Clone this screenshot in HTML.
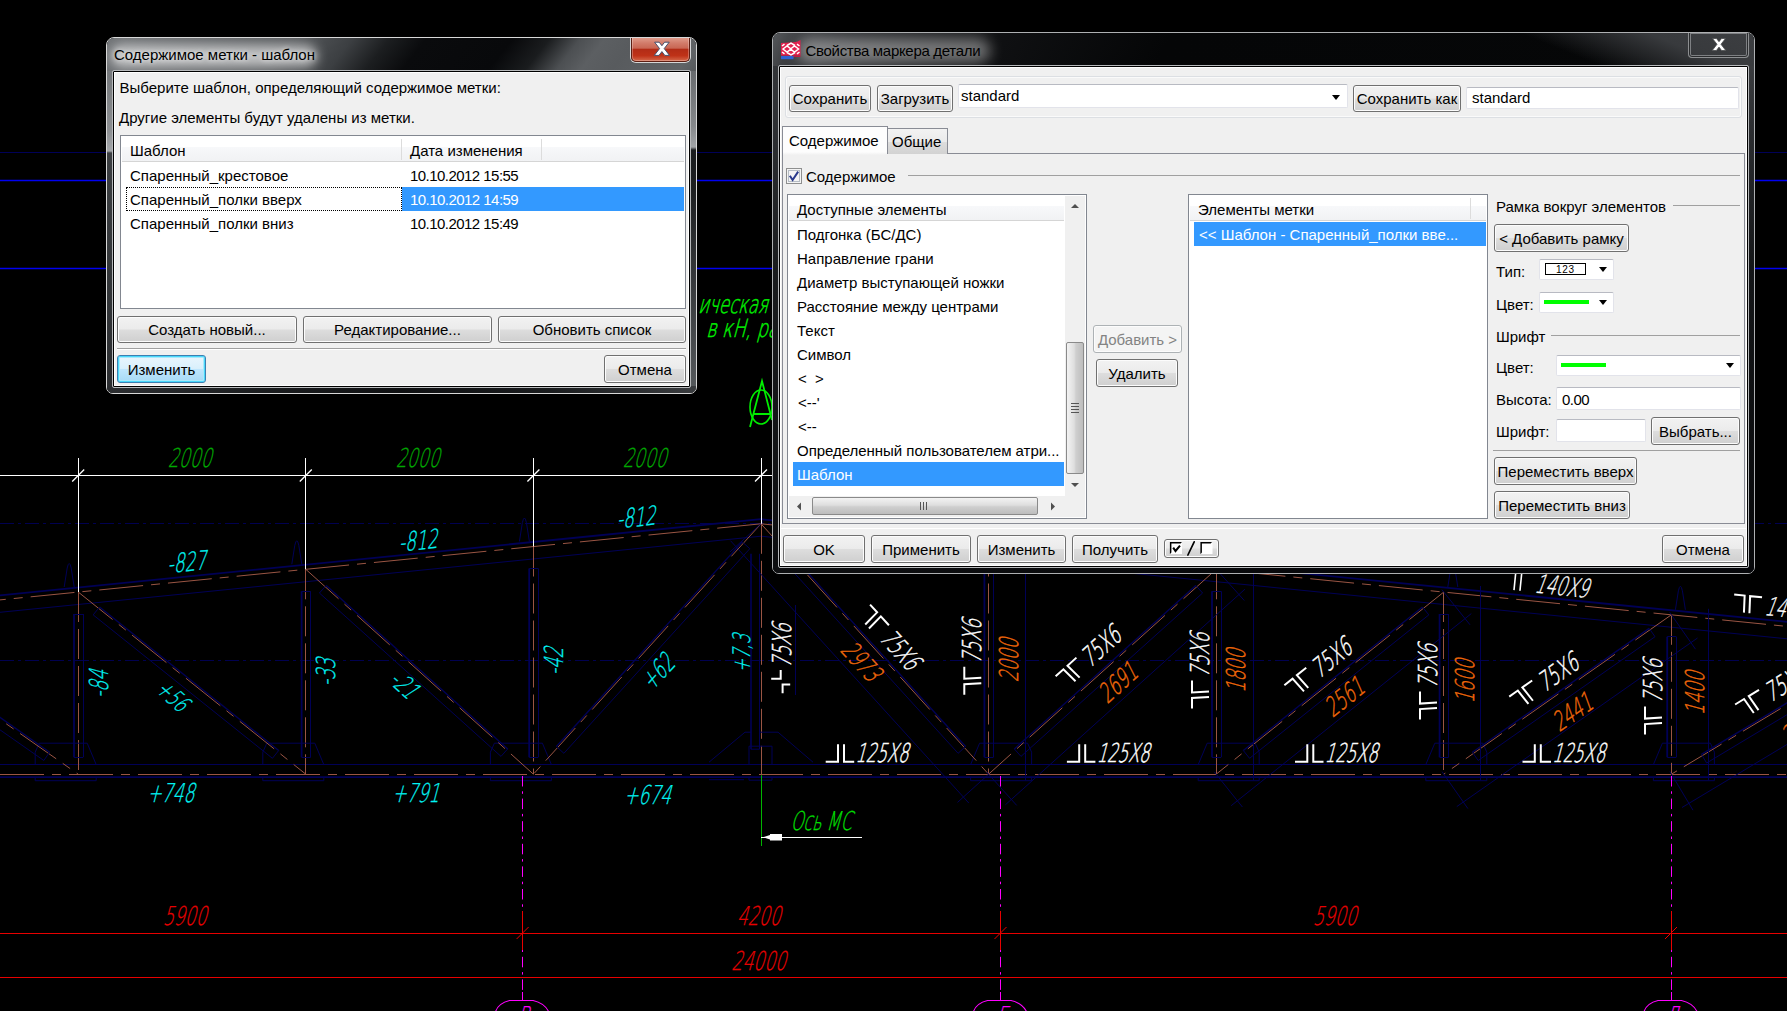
<!DOCTYPE html>
<html lang="ru">
<head>
<meta charset="utf-8">
<title>Свойства маркера детали</title>
<style>
*{box-sizing:border-box;margin:0;padding:0}
html,body{width:1787px;height:1011px;overflow:hidden;background:#000}
body{position:relative;font-family:"Liberation Sans",sans-serif;font-size:15px;color:#000;line-height:1}
.abs{position:absolute}
#cad{position:absolute;left:0;top:0;width:1787px;height:1011px}
/* window frames */
.win{position:absolute;overflow:hidden;border-radius:8px 8px 7px 7px;border:1px solid #9a9c9e;background:#0b0c0e;box-shadow:inset 0 0 0 1px rgba(0,0,0,.55)}
.win .tbar{position:absolute;left:0;top:0;right:0;height:34px}
.win .sideL{position:absolute;left:0;top:33px;bottom:0;width:7px}
.win .sideR{position:absolute;right:0;top:33px;bottom:0;width:7px}
.win .botm{position:absolute;left:0;right:0;bottom:0;height:7px}
.ttl{position:absolute;white-space:nowrap;font-size:15px;color:#000;
 text-shadow:0 0 4px rgba(255,255,255,.55),0 0 7px rgba(255,255,255,.45)}
.glow{position:absolute;border-radius:12px;background:rgba(255,255,255,.62);filter:blur(6px)}
.client{position:absolute;background:#f0f0f0;border:1px solid #000;outline:1px solid #b8babc;box-shadow:inset 0 0 0 1px #fff;border-radius:1px}
.t{position:absolute;white-space:nowrap;font-size:15px;line-height:18px;height:18px}
.num{letter-spacing:-.54px}
.btn{position:absolute;border:1px solid #707070;border-radius:3px;text-align:center;white-space:nowrap;font-size:15px;
 background:linear-gradient(180deg,#f2f2f2 0,#ebebeb 48%,#dddddd 52%,#cfcfcf 100%);box-shadow:inset 0 0 0 1px #fcfcfc}
.btn.def{border-color:#3c7fb1;box-shadow:inset 0 0 0 1px #48d8fb, inset 0 0 0 2px #a9e9fb;background:linear-gradient(180deg,#eaf6fd 0,#d9f0fc 48%,#bee6fd 52%,#a7d9f5 100%)}
.btn.dis{color:#838383;border-color:#adb2b5;background:#f4f4f4}
.btn span{position:absolute;left:0;right:0;top:50%;margin-top:-8.5px;line-height:18px;height:18px}
.inp{position:absolute;background:#fff;border:1px solid #e3e9ef;border-top-color:#abadb3;border-radius:2px;box-shadow:none}
.inp2{position:absolute;background:#fff;border:1px solid #e2e3ea;border-top-color:#b8bac2;border-radius:2px}
.list{position:absolute;background:#fff;border:1px solid #828790}
.hdr{position:absolute;background:linear-gradient(180deg,#fff 0,#fff 40%,#f7f8fa 41%,#f1f2f4 100%);border-bottom:1px solid #d5d5d5}
.sel{position:absolute;background:#3399ff;color:#fff}
.hline{position:absolute;height:2px;border-top:1px solid #a0a0a0;border-bottom:1px solid #fff}
.arr{position:absolute;width:0;height:0;margin:1px 0 0 .5px;border-left:4.5px solid transparent;border-right:4.5px solid transparent;border-top:5px solid #000}
.closeb{position:absolute;border:1px solid #3d3f41;border-top:none;border-radius:0 0 5px 5px;box-shadow:0 0 0 1px rgba(255,255,255,.35), inset 0 0 0 1px rgba(255,255,255,.3)}
</style>
</head>
<body>
<svg id="cad" width="1787" height="1011" viewBox="0 0 1787 1011" font-family="'DejaVu Sans','Liberation Sans',sans-serif" shape-rendering="auto">
<line x1="0.0" y1="152.5" x2="1787.0" y2="152.5" stroke="#000058" stroke-width="1"/>
<line x1="0.0" y1="180.5" x2="1787.0" y2="180.5" stroke="#0000f0" stroke-width="1.3"/>
<line x1="0.0" y1="268.5" x2="1787.0" y2="268.5" stroke="#0000f0" stroke-width="1.3"/>
<line x1="0.0" y1="523.5" x2="1787.0" y2="523.5" stroke="#000050" stroke-width="1" stroke-dasharray="14 4 3 4"/>
<line x1="0.0" y1="660.5" x2="1787.0" y2="660.5" stroke="#000050" stroke-width="1" stroke-dasharray="14 4 3 4"/>
<line x1="761.0" y1="523.8" x2="-339.0" y2="633.8" stroke="#9a5544" stroke-width="1" stroke-dasharray="44 8 9 8"/>
<line x1="761.0" y1="519.2" x2="-339.0" y2="629.2" stroke="#000056" stroke-width="1.8"/>
<line x1="761.0" y1="536.2" x2="-339.0" y2="646.2" stroke="#000056" stroke-width="1"/>
<line x1="761.0" y1="523.8" x2="1861.0" y2="633.8" stroke="#9a5544" stroke-width="1" stroke-dasharray="44 8 9 8"/>
<line x1="761.0" y1="519.2" x2="1861.0" y2="629.2" stroke="#000056" stroke-width="1.8"/>
<line x1="761.0" y1="536.2" x2="1861.0" y2="646.2" stroke="#000056" stroke-width="1"/>
<line x1="0.0" y1="774.5" x2="1787.0" y2="774.5" stroke="#9a5544" stroke-width="1" stroke-dasharray="44 8 9 8"/>
<line x1="0.0" y1="764.5" x2="1787.0" y2="764.5" stroke="#000056" stroke-width="1"/>
<line x1="0.0" y1="777.2" x2="1787.0" y2="777.2" stroke="#000056" stroke-width="1.8"/>
<line x1="-149.5" y1="614.8" x2="-149.5" y2="774.2" stroke="#9a5544" stroke-width="1" stroke-dasharray="30 7"/>
<line x1="-153.6" y1="636.8" x2="-153.6" y2="757.2" stroke="#000056" stroke-width="1.8"/>
<line x1="-144.5" y1="636.8" x2="-144.5" y2="757.2" stroke="#000056" stroke-width="1"/>
<line x1="-153.6" y1="757.5" x2="-144.6" y2="757.5" stroke="#000056" stroke-width="1"/>
<line x1="-153.6" y1="636.5" x2="-144.6" y2="636.5" stroke="#000056" stroke-width="1"/>
<path d="M-192.4,764.6 V752.2 L-188.4,743.2 H-140.4 L-131.4,764.6" stroke="#000056" stroke-width="1" fill="none"/>
<path d="M-192.4,777.2 V780.7 H-131.4 V777.2" stroke="#000056" stroke-width="1" fill="none"/>
<path d="M-163.4,609.79 L-160.4,590.79 Q-158.4,581.79 -156.4,590.79 L-153.4,609.79" stroke="#000056" stroke-width="1" fill="none"/>
<line x1="78.5" y1="592.0" x2="78.5" y2="774.2" stroke="#9a5544" stroke-width="1" stroke-dasharray="30 7"/>
<line x1="74.0" y1="614.0" x2="74.0" y2="757.2" stroke="#000056" stroke-width="1.8"/>
<line x1="83.5" y1="614.0" x2="83.5" y2="757.2" stroke="#000056" stroke-width="1"/>
<line x1="74.0" y1="757.5" x2="83.0" y2="757.5" stroke="#000056" stroke-width="1"/>
<line x1="74.0" y1="614.5" x2="83.0" y2="614.5" stroke="#000056" stroke-width="1"/>
<path d="M35.2,764.6 V752.2 L39.2,743.2 H87.2 L96.2,764.6" stroke="#000056" stroke-width="1" fill="none"/>
<path d="M35.2,777.2 V780.7 H96.2 V777.2" stroke="#000056" stroke-width="1" fill="none"/>
<path d="M64.2,587.03 L67.2,568.03 Q69.2,559.03 71.2,568.03 L74.2,587.03" stroke="#000056" stroke-width="1" fill="none"/>
<line x1="305.5" y1="569.3" x2="305.5" y2="774.2" stroke="#9a5544" stroke-width="1" stroke-dasharray="30 7"/>
<line x1="301.6" y1="591.3" x2="301.6" y2="757.2" stroke="#000056" stroke-width="1.8"/>
<line x1="310.5" y1="591.3" x2="310.5" y2="757.2" stroke="#000056" stroke-width="1"/>
<line x1="301.6" y1="757.5" x2="310.6" y2="757.5" stroke="#000056" stroke-width="1"/>
<line x1="301.6" y1="591.5" x2="310.6" y2="591.5" stroke="#000056" stroke-width="1"/>
<path d="M262.8,764.6 V752.2 L266.8,743.2 H314.8 L323.8,764.6" stroke="#000056" stroke-width="1" fill="none"/>
<path d="M262.8,777.2 V780.7 H323.8 V777.2" stroke="#000056" stroke-width="1" fill="none"/>
<path d="M291.8,564.27 L294.8,545.27 Q296.8,536.27 298.8,545.27 L301.8,564.27" stroke="#000056" stroke-width="1" fill="none"/>
<line x1="533.5" y1="546.5" x2="533.5" y2="774.2" stroke="#9a5544" stroke-width="1" stroke-dasharray="30 7"/>
<line x1="529.2" y1="568.5" x2="529.2" y2="757.2" stroke="#000056" stroke-width="1.8"/>
<line x1="538.5" y1="568.5" x2="538.5" y2="757.2" stroke="#000056" stroke-width="1"/>
<line x1="529.2" y1="757.5" x2="538.2" y2="757.5" stroke="#000056" stroke-width="1"/>
<line x1="529.2" y1="568.5" x2="538.2" y2="568.5" stroke="#000056" stroke-width="1"/>
<path d="M490.4,764.6 V752.2 L494.4,743.2 H542.4 L551.4,764.6" stroke="#000056" stroke-width="1" fill="none"/>
<path d="M490.4,777.2 V780.7 H551.4 V777.2" stroke="#000056" stroke-width="1" fill="none"/>
<path d="M519.4,541.51 L522.4,522.51 Q524.4,513.51 526.4,522.51 L529.4,541.51" stroke="#000056" stroke-width="1" fill="none"/>
<line x1="988.5" y1="546.5" x2="988.5" y2="774.2" stroke="#9a5544" stroke-width="1" stroke-dasharray="30 7"/>
<line x1="984.4" y1="568.5" x2="984.4" y2="757.2" stroke="#000056" stroke-width="1.8"/>
<line x1="993.5" y1="568.5" x2="993.5" y2="757.2" stroke="#000056" stroke-width="1"/>
<line x1="984.4" y1="757.5" x2="993.4" y2="757.5" stroke="#000056" stroke-width="1"/>
<line x1="984.4" y1="568.5" x2="993.4" y2="568.5" stroke="#000056" stroke-width="1"/>
<path d="M1031.6,764.6 V752.2 L1027.6,743.2 H979.6 L970.6,764.6" stroke="#000056" stroke-width="1" fill="none"/>
<path d="M1031.6,777.2 V780.7 H970.6 V777.2" stroke="#000056" stroke-width="1" fill="none"/>
<path d="M992.6,541.51 L995.6,522.51 Q997.6,513.51 999.6,522.51 L1002.6,541.51" stroke="#000056" stroke-width="1" fill="none"/>
<line x1="1216.5" y1="569.3" x2="1216.5" y2="774.2" stroke="#9a5544" stroke-width="1" stroke-dasharray="30 7"/>
<line x1="1212.0" y1="591.3" x2="1212.0" y2="757.2" stroke="#000056" stroke-width="1.8"/>
<line x1="1221.5" y1="591.3" x2="1221.5" y2="757.2" stroke="#000056" stroke-width="1"/>
<line x1="1212.0" y1="757.5" x2="1221.0" y2="757.5" stroke="#000056" stroke-width="1"/>
<line x1="1212.0" y1="591.5" x2="1221.0" y2="591.5" stroke="#000056" stroke-width="1"/>
<path d="M1259.2,764.6 V752.2 L1255.2,743.2 H1207.2 L1198.2,764.6" stroke="#000056" stroke-width="1" fill="none"/>
<path d="M1259.2,777.2 V780.7 H1198.2 V777.2" stroke="#000056" stroke-width="1" fill="none"/>
<path d="M1220.2,564.27 L1223.2,545.27 Q1225.2,536.27 1227.2,545.27 L1230.2,564.27" stroke="#000056" stroke-width="1" fill="none"/>
<line x1="1443.5" y1="592.0" x2="1443.5" y2="774.2" stroke="#9a5544" stroke-width="1" stroke-dasharray="30 7"/>
<line x1="1439.6" y1="614.0" x2="1439.6" y2="757.2" stroke="#000056" stroke-width="1.8"/>
<line x1="1448.5" y1="614.0" x2="1448.5" y2="757.2" stroke="#000056" stroke-width="1"/>
<line x1="1439.6" y1="757.5" x2="1448.6" y2="757.5" stroke="#000056" stroke-width="1"/>
<line x1="1439.6" y1="614.5" x2="1448.6" y2="614.5" stroke="#000056" stroke-width="1"/>
<path d="M1486.8,764.6 V752.2 L1482.8,743.2 H1434.8 L1425.8,764.6" stroke="#000056" stroke-width="1" fill="none"/>
<path d="M1486.8,777.2 V780.7 H1425.8 V777.2" stroke="#000056" stroke-width="1" fill="none"/>
<path d="M1447.8,587.03 L1450.8,568.03 Q1452.8,559.03 1454.8,568.03 L1457.8,587.03" stroke="#000056" stroke-width="1" fill="none"/>
<line x1="1671.5" y1="614.8" x2="1671.5" y2="774.2" stroke="#9a5544" stroke-width="1" stroke-dasharray="30 7"/>
<line x1="1667.2" y1="636.8" x2="1667.2" y2="757.2" stroke="#000056" stroke-width="1.8"/>
<line x1="1676.5" y1="636.8" x2="1676.5" y2="757.2" stroke="#000056" stroke-width="1"/>
<line x1="1667.2" y1="757.5" x2="1676.2" y2="757.5" stroke="#000056" stroke-width="1"/>
<line x1="1667.2" y1="636.5" x2="1676.2" y2="636.5" stroke="#000056" stroke-width="1"/>
<path d="M1714.4,764.6 V752.2 L1710.4,743.2 H1662.4 L1653.4,764.6" stroke="#000056" stroke-width="1" fill="none"/>
<path d="M1714.4,777.2 V780.7 H1653.4 V777.2" stroke="#000056" stroke-width="1" fill="none"/>
<path d="M1675.4,609.79 L1678.4,590.79 Q1680.4,581.79 1682.4,590.79 L1685.4,609.79" stroke="#000056" stroke-width="1" fill="none"/>
<line x1="1899.5" y1="637.5" x2="1899.5" y2="774.2" stroke="#9a5544" stroke-width="1" stroke-dasharray="30 7"/>
<line x1="1894.8" y1="659.5" x2="1894.8" y2="757.2" stroke="#000056" stroke-width="1.8"/>
<line x1="1903.5" y1="659.5" x2="1903.5" y2="757.2" stroke="#000056" stroke-width="1"/>
<line x1="1894.8" y1="757.5" x2="1903.8" y2="757.5" stroke="#000056" stroke-width="1"/>
<line x1="1894.8" y1="659.5" x2="1903.8" y2="659.5" stroke="#000056" stroke-width="1"/>
<path d="M1942.0,764.6 V752.2 L1938.0,743.2 H1890.0 L1881.0,764.6" stroke="#000056" stroke-width="1" fill="none"/>
<path d="M1942.0,777.2 V780.7 H1881.0 V777.2" stroke="#000056" stroke-width="1" fill="none"/>
<path d="M1903.0,632.55 L1906.0,613.55 Q1908.0,604.55 1910.0,613.55 L1913.0,632.55" stroke="#000056" stroke-width="1" fill="none"/>
<line x1="761.5" y1="523.8" x2="761.5" y2="774.2" stroke="#9a5544" stroke-width="1" stroke-dasharray="30 7"/>
<line x1="751.0" y1="553.8" x2="751.0" y2="749.2" stroke="#000056" stroke-width="1.6"/>
<line x1="759.5" y1="553.8" x2="759.5" y2="749.2" stroke="#000056" stroke-width="1"/>
<path d="M751.0,749.2 H759.5" stroke="#000056" stroke-width="1" fill="none"/>
<path d="M709,762.2 L745,732.2 H751.0 M759.5,732.2 H778 L813,762.2" stroke="#000056" stroke-width="1" fill="none"/>
<path d="M749,764.6 V746.2 H772 V764.6 M749,777.2 V780.2 H772 V777.2 M709,779.7 H744" stroke="#000056" stroke-width="1" fill="none"/>
<line x1="-149.4" y1="614.8" x2="78.2" y2="774.2" stroke="#9a5544" stroke-width="1" stroke-dasharray="44 8 9 8"/>
<line x1="-127.2" y1="628.4" x2="49.6" y2="752.2" stroke="#000056" stroke-width="1.4"/>
<line x1="-133.0" y1="636.7" x2="43.8" y2="760.5" stroke="#000056" stroke-width="1"/>
<line x1="-127.2" y1="628.4" x2="-133.0" y2="636.7" stroke="#000056" stroke-width="1"/>
<line x1="49.6" y1="752.2" x2="43.8" y2="760.5" stroke="#000056" stroke-width="1"/>
<line x1="78.2" y1="592.0" x2="305.8" y2="774.2" stroke="#9a5544" stroke-width="1" stroke-dasharray="44 8 9 8"/>
<line x1="99.5" y1="607.0" x2="278.7" y2="750.5" stroke="#000056" stroke-width="1.4"/>
<line x1="93.2" y1="614.9" x2="272.4" y2="758.3" stroke="#000056" stroke-width="1"/>
<line x1="99.5" y1="607.0" x2="93.2" y2="614.9" stroke="#000056" stroke-width="1"/>
<line x1="278.7" y1="750.5" x2="272.4" y2="758.3" stroke="#000056" stroke-width="1"/>
<line x1="305.8" y1="569.3" x2="533.4" y2="774.2" stroke="#9a5544" stroke-width="1" stroke-dasharray="44 8 9 8"/>
<line x1="326.2" y1="585.5" x2="507.7" y2="748.9" stroke="#000056" stroke-width="1.4"/>
<line x1="319.4" y1="593.0" x2="501.0" y2="756.4" stroke="#000056" stroke-width="1"/>
<line x1="326.2" y1="585.5" x2="319.4" y2="593.0" stroke="#000056" stroke-width="1"/>
<line x1="507.7" y1="748.9" x2="501.0" y2="756.4" stroke="#000056" stroke-width="1"/>
<line x1="761.0" y1="523.8" x2="533.4" y2="774.2" stroke="#9a5544" stroke-width="1" stroke-dasharray="44 8 9 8"/>
<line x1="742.3" y1="541.9" x2="556.4" y2="746.5" stroke="#000056" stroke-width="1.4"/>
<line x1="749.8" y1="548.7" x2="563.9" y2="753.3" stroke="#000056" stroke-width="1"/>
<line x1="742.3" y1="541.9" x2="749.8" y2="548.7" stroke="#000056" stroke-width="1"/>
<line x1="556.4" y1="746.5" x2="563.9" y2="753.3" stroke="#000056" stroke-width="1"/>
<line x1="761.0" y1="523.8" x2="988.6" y2="774.2" stroke="#9a5544" stroke-width="1" stroke-dasharray="44 8 9 8"/>
<line x1="779.7" y1="541.9" x2="965.6" y2="746.5" stroke="#000056" stroke-width="1.4"/>
<line x1="772.2" y1="548.7" x2="958.1" y2="753.3" stroke="#000056" stroke-width="1"/>
<line x1="779.7" y1="541.9" x2="772.2" y2="548.7" stroke="#000056" stroke-width="1"/>
<line x1="965.6" y1="746.5" x2="958.1" y2="753.3" stroke="#000056" stroke-width="1"/>
<line x1="730.5" y1="540.7" x2="968.8" y2="803.0" stroke="#000056" stroke-width="1"/>
<line x1="763.2" y1="521.7" x2="729.9" y2="552.0" stroke="#000056" stroke-width="1"/>
<line x1="990.8" y1="772.2" x2="957.5" y2="802.4" stroke="#000056" stroke-width="1"/>
<line x1="1216.2" y1="569.3" x2="988.6" y2="774.2" stroke="#9a5544" stroke-width="1" stroke-dasharray="44 8 9 8"/>
<line x1="1195.8" y1="585.5" x2="1014.3" y2="748.9" stroke="#000056" stroke-width="1.4"/>
<line x1="1202.6" y1="593.0" x2="1021.0" y2="756.4" stroke="#000056" stroke-width="1"/>
<line x1="1195.8" y1="585.5" x2="1202.6" y2="593.0" stroke="#000056" stroke-width="1"/>
<line x1="1014.3" y1="748.9" x2="1021.0" y2="756.4" stroke="#000056" stroke-width="1"/>
<line x1="1244.9" y1="589.2" x2="1005.4" y2="804.8" stroke="#000056" stroke-width="1"/>
<line x1="1214.2" y1="567.0" x2="1244.3" y2="600.5" stroke="#000056" stroke-width="1"/>
<line x1="986.6" y1="772.0" x2="1016.7" y2="805.4" stroke="#000056" stroke-width="1"/>
<line x1="1443.8" y1="592.0" x2="1216.2" y2="774.2" stroke="#9a5544" stroke-width="1" stroke-dasharray="44 8 9 8"/>
<line x1="1422.5" y1="607.0" x2="1243.3" y2="750.5" stroke="#000056" stroke-width="1.4"/>
<line x1="1428.8" y1="614.9" x2="1249.6" y2="758.3" stroke="#000056" stroke-width="1"/>
<line x1="1422.5" y1="607.0" x2="1428.8" y2="614.9" stroke="#000056" stroke-width="1"/>
<line x1="1243.3" y1="750.5" x2="1249.6" y2="758.3" stroke="#000056" stroke-width="1"/>
<line x1="1471.3" y1="613.6" x2="1231.2" y2="805.7" stroke="#000056" stroke-width="1"/>
<line x1="1441.9" y1="589.7" x2="1470.0" y2="624.8" stroke="#000056" stroke-width="1"/>
<line x1="1214.3" y1="771.9" x2="1242.4" y2="807.0" stroke="#000056" stroke-width="1"/>
<line x1="1671.4" y1="614.8" x2="1443.8" y2="774.2" stroke="#9a5544" stroke-width="1" stroke-dasharray="44 8 9 8"/>
<line x1="1649.2" y1="628.4" x2="1472.4" y2="752.2" stroke="#000056" stroke-width="1.4"/>
<line x1="1655.0" y1="636.7" x2="1478.2" y2="760.5" stroke="#000056" stroke-width="1"/>
<line x1="1649.2" y1="628.4" x2="1655.0" y2="636.7" stroke="#000056" stroke-width="1"/>
<line x1="1472.4" y1="752.2" x2="1478.2" y2="760.5" stroke="#000056" stroke-width="1"/>
<line x1="1697.5" y1="638.0" x2="1456.8" y2="806.6" stroke="#000056" stroke-width="1"/>
<line x1="1669.7" y1="612.3" x2="1695.5" y2="649.2" stroke="#000056" stroke-width="1"/>
<line x1="1442.1" y1="771.7" x2="1467.9" y2="808.6" stroke="#000056" stroke-width="1"/>
<line x1="1899.0" y1="637.5" x2="1671.4" y2="774.2" stroke="#9a5544" stroke-width="1" stroke-dasharray="44 8 9 8"/>
<line x1="1875.9" y1="649.6" x2="1701.4" y2="754.3" stroke="#000056" stroke-width="1.4"/>
<line x1="1881.1" y1="658.2" x2="1706.6" y2="763.0" stroke="#000056" stroke-width="1"/>
<line x1="1875.9" y1="649.6" x2="1881.1" y2="658.2" stroke="#000056" stroke-width="1"/>
<line x1="1701.4" y1="754.3" x2="1706.6" y2="763.0" stroke="#000056" stroke-width="1"/>
<line x1="1923.4" y1="662.6" x2="1682.0" y2="807.5" stroke="#000056" stroke-width="1"/>
<line x1="1897.5" y1="635.0" x2="1920.6" y2="673.6" stroke="#000056" stroke-width="1"/>
<line x1="1669.9" y1="771.6" x2="1693.0" y2="810.2" stroke="#000056" stroke-width="1"/>
<line x1="1025.5" y1="540.5" x2="1025.5" y2="780.2" stroke="#000056" stroke-width="1"/>
<line x1="1253.5" y1="563.3" x2="1253.5" y2="780.2" stroke="#000056" stroke-width="1"/>
<line x1="1480.5" y1="586.0" x2="1480.5" y2="780.2" stroke="#000056" stroke-width="1"/>
<line x1="1708.5" y1="608.8" x2="1708.5" y2="780.2" stroke="#000056" stroke-width="1"/>
<line x1="0.0" y1="475.5" x2="772.0" y2="475.5" stroke="#ffffff" stroke-width="1"/>
<line x1="78.5" y1="458.0" x2="78.5" y2="592.0" stroke="#ffffff" stroke-width="1"/>
<line x1="72.2" y1="481.5" x2="84.2" y2="469.5" stroke="#ffffff" stroke-width="1.3"/>
<line x1="305.5" y1="458.0" x2="305.5" y2="569.3" stroke="#ffffff" stroke-width="1"/>
<line x1="299.8" y1="481.5" x2="311.8" y2="469.5" stroke="#ffffff" stroke-width="1.3"/>
<line x1="533.5" y1="458.0" x2="533.5" y2="546.5" stroke="#ffffff" stroke-width="1"/>
<line x1="527.4" y1="481.5" x2="539.4" y2="469.5" stroke="#ffffff" stroke-width="1.3"/>
<line x1="761.5" y1="458.0" x2="761.5" y2="523.8" stroke="#ffffff" stroke-width="1"/>
<line x1="755.0" y1="481.5" x2="767.0" y2="469.5" stroke="#ffffff" stroke-width="1.3"/>
<text transform="translate(189.5,467.0) rotate(0) skewX(-15) scale(0.66,1)" font-size="26" font-weight="200" fill="#00a800" text-anchor="middle" stroke="#00a800" stroke-width="0.3">2000</text>
<text transform="translate(417.5,467.0) rotate(0) skewX(-15) scale(0.66,1)" font-size="26" font-weight="200" fill="#00a800" text-anchor="middle" stroke="#00a800" stroke-width="0.3">2000</text>
<text transform="translate(644.5,467.0) rotate(0) skewX(-15) scale(0.66,1)" font-size="26" font-weight="200" fill="#00a800" text-anchor="middle" stroke="#00a800" stroke-width="0.3">2000</text>
<text transform="translate(187.2,571.2) rotate(-5.7) skewX(-15) scale(0.66,1)" font-size="26" font-weight="200" fill="#00f4f4" text-anchor="middle" stroke="#00f4f4" stroke-width="0.3">-827</text>
<text transform="translate(418.5,549.7) rotate(-5.7) skewX(-15) scale(0.66,1)" font-size="26" font-weight="200" fill="#00f4f4" text-anchor="middle" stroke="#00f4f4" stroke-width="0.3">-812</text>
<text transform="translate(636.5,526.4) rotate(-5.7) skewX(-15) scale(0.66,1)" font-size="26" font-weight="200" fill="#00f4f4" text-anchor="middle" stroke="#00f4f4" stroke-width="0.3">-812</text>
<text transform="translate(107.5,684.2) rotate(-90) skewX(-15) scale(0.66,1)" font-size="26" font-weight="200" fill="#00f4f4" text-anchor="middle" stroke="#00f4f4" stroke-width="0.3">-84</text>
<text transform="translate(166.8,701.8) rotate(42) skewX(-15) scale(0.66,1)" font-size="24" font-weight="200" fill="#00f4f4" text-anchor="middle" stroke="#00f4f4" stroke-width="0.3">+56</text>
<text transform="translate(335.1,672.5) rotate(-90) skewX(-15) scale(0.66,1)" font-size="26" font-weight="200" fill="#00f4f4" text-anchor="middle" stroke="#00f4f4" stroke-width="0.3">-33</text>
<text transform="translate(397.8,690.9) rotate(42) skewX(-15) scale(0.66,1)" font-size="26" font-weight="200" fill="#00f4f4" text-anchor="middle" stroke="#00f4f4" stroke-width="0.3">-21</text>
<text transform="translate(563.2,661.5) rotate(-90) skewX(-15) scale(0.66,1)" font-size="26" font-weight="200" fill="#00f4f4" text-anchor="middle" stroke="#00f4f4" stroke-width="0.3">-42</text>
<text transform="translate(664.1,678.2) rotate(-47.7) skewX(-15) scale(0.66,1)" font-size="26" font-weight="200" fill="#00f4f4" text-anchor="middle" stroke="#00f4f4" stroke-width="0.3">+62</text>
<text transform="translate(749.5,653.5) rotate(-90) skewX(-15) scale(0.66,1)" font-size="24" font-weight="200" fill="#00f4f4" text-anchor="middle" stroke="#00f4f4" stroke-width="0.3">+7,3</text>
<text transform="translate(170.5,801.5) rotate(0) skewX(-15) scale(0.66,1)" font-size="26" font-weight="200" fill="#00f4f4" text-anchor="middle" stroke="#00f4f4" stroke-width="0.3">+748</text>
<text transform="translate(415.5,801.5) rotate(0) skewX(-15) scale(0.66,1)" font-size="26" font-weight="200" fill="#00f4f4" text-anchor="middle" stroke="#00f4f4" stroke-width="0.3">+791</text>
<text transform="translate(647.2,803.5) rotate(0) skewX(-15) scale(0.66,1)" font-size="26" font-weight="200" fill="#00f4f4" text-anchor="middle" stroke="#00f4f4" stroke-width="0.3">+674</text>
<text transform="translate(698.0,313.0) rotate(0) skewX(-15) scale(0.66,1)" font-size="25" font-weight="200" fill="#00f000" text-anchor="start" stroke="#00f000" stroke-width="0.5">ическая</text>
<text transform="translate(706.0,337.0) rotate(0) skewX(-15) scale(0.7,1)" font-size="25" font-weight="200" fill="#00f000" text-anchor="start" stroke="#00f000" stroke-width="0.5">в кН, ра</text>
<ellipse cx="761" cy="407" rx="11" ry="17" fill="none" stroke="#00ee00" stroke-width="1.6"/>
<path d="M750,427 L762,381 L772,420 M753,414 H770" stroke="#00ee00" stroke-width="1.8" fill="none"/>
<line x1="761.5" y1="775.2" x2="761.5" y2="846.0" stroke="#00b400" stroke-width="1"/>
<line x1="761.0" y1="837.5" x2="862.0" y2="837.5" stroke="#ffffff" stroke-width="1"/>
<path d="M763,837.2 L770,835 L770,834 L782,834 L782,840.5 L770,840.5 L770,839.5 Z" stroke="#ffffff" stroke-width="0" fill="#ffffff"/>
<text transform="translate(790.5,830.0) rotate(0) skewX(-15) scale(0.615,1)" font-size="26" font-weight="200" fill="#00e000" text-anchor="start" stroke="#00e000" stroke-width="0.3">Ось МС</text>
<line x1="0.0" y1="933.5" x2="1787.0" y2="933.5" stroke="#e80000" stroke-width="1"/>
<line x1="0.0" y1="977.5" x2="1787.0" y2="977.5" stroke="#e80000" stroke-width="1"/>
<line x1="522.5" y1="776.0" x2="522.5" y2="992.0" stroke="#ff00ff" stroke-width="1" stroke-dasharray="10.5 4.8 2.5 4.8"/>
<line x1="522.5" y1="992.0" x2="522.5" y2="1000.5" stroke="#ff00ff" stroke-width="1"/>
<line x1="522.5" y1="911.0" x2="522.5" y2="950.0" stroke="#e80000" stroke-width="1"/>
<line x1="516.6" y1="939.0" x2="528.6" y2="927.0" stroke="#e80000" stroke-width="1"/>
<path d="M495.6,1011.5 C497.6,1005.5 503.6,1002 509.6,1000.5 H533.1 C539.6,1002 545.6,1005.5 548.6,1011.5" stroke="#ff00ff" stroke-width="1.1" fill="none"/>
<line x1="1000.5" y1="776.0" x2="1000.5" y2="992.0" stroke="#ff00ff" stroke-width="1" stroke-dasharray="10.5 4.8 2.5 4.8"/>
<line x1="1000.5" y1="992.0" x2="1000.5" y2="1000.5" stroke="#ff00ff" stroke-width="1"/>
<line x1="1000.5" y1="911.0" x2="1000.5" y2="950.0" stroke="#e80000" stroke-width="1"/>
<line x1="994.5" y1="939.0" x2="1006.5" y2="927.0" stroke="#e80000" stroke-width="1"/>
<path d="M973.5,1011.5 C975.5,1005.5 981.5,1002 987.5,1000.5 H1011.0 C1017.5,1002 1023.5,1005.5 1026.5,1011.5" stroke="#ff00ff" stroke-width="1.1" fill="none"/>
<line x1="1671.5" y1="776.0" x2="1671.5" y2="992.0" stroke="#ff00ff" stroke-width="1" stroke-dasharray="10.5 4.8 2.5 4.8"/>
<line x1="1671.5" y1="992.0" x2="1671.5" y2="1000.5" stroke="#ff00ff" stroke-width="1"/>
<line x1="1671.5" y1="911.0" x2="1671.5" y2="950.0" stroke="#e80000" stroke-width="1"/>
<line x1="1665.0" y1="939.0" x2="1677.0" y2="927.0" stroke="#e80000" stroke-width="1"/>
<path d="M1644.0,1011.5 C1646.0,1005.5 1652.0,1002 1658.0,1000.5 H1681.5 C1688.0,1002 1694.0,1005.5 1697.0,1011.5" stroke="#ff00ff" stroke-width="1.1" fill="none"/>
<text transform="translate(184.5,925.3) rotate(0) skewX(-15) scale(0.66,1)" font-size="26" font-weight="200" fill="#e80000" text-anchor="middle" stroke="#e80000" stroke-width="0.3">5900</text>
<text transform="translate(758.5,925.3) rotate(0) skewX(-15) scale(0.66,1)" font-size="26" font-weight="200" fill="#e80000" text-anchor="middle" stroke="#e80000" stroke-width="0.3">4200</text>
<text transform="translate(1334.5,925.3) rotate(0) skewX(-15) scale(0.66,1)" font-size="26" font-weight="200" fill="#e80000" text-anchor="middle" stroke="#e80000" stroke-width="0.3">5900</text>
<text transform="translate(758.5,969.5) rotate(0) skewX(-15) scale(0.66,1)" font-size="26" font-weight="200" fill="#e80000" text-anchor="middle" stroke="#e80000" stroke-width="0.3">24000</text>
<text transform="translate(522.6,1025.0) rotate(0) skewX(-15) scale(0.66,1)" font-size="26" font-weight="200" fill="#ff00ff" text-anchor="middle" stroke="#ff00ff" stroke-width="0.3">В</text>
<text transform="translate(1000.5,1025.0) rotate(0) skewX(-15) scale(0.66,1)" font-size="26" font-weight="200" fill="#ff00ff" text-anchor="middle" stroke="#ff00ff" stroke-width="0.3">Г</text>
<text transform="translate(1671.0,1025.0) rotate(0) skewX(-15) scale(0.66,1)" font-size="26" font-weight="200" fill="#ff00ff" text-anchor="middle" stroke="#ff00ff" stroke-width="0.3">Д</text>
<path d="M825.7,761.8 H838.0 V744.3 M844.0,744.3 V761.8 H854.2" stroke="#ffffff" stroke-width="2" fill="none"/>
<text transform="translate(855.2,761.5) rotate(0) skewX(-15) scale(0.63,1)" font-size="26" font-weight="200" fill="#ffffff" text-anchor="start" stroke="#ffffff" stroke-width="0.5">125X8</text>
<path d="M1066.9,761.8 H1079.2 V744.3 M1085.2,744.3 V761.8 H1095.4" stroke="#ffffff" stroke-width="2" fill="none"/>
<text transform="translate(1096.4,761.5) rotate(0) skewX(-15) scale(0.63,1)" font-size="26" font-weight="200" fill="#ffffff" text-anchor="start" stroke="#ffffff" stroke-width="0.5">125X8</text>
<path d="M1295,761.8 H1307.3 V744.3 M1313.3,744.3 V761.8 H1323.5" stroke="#ffffff" stroke-width="2" fill="none"/>
<text transform="translate(1324.5,761.5) rotate(0) skewX(-15) scale(0.63,1)" font-size="26" font-weight="200" fill="#ffffff" text-anchor="start" stroke="#ffffff" stroke-width="0.5">125X8</text>
<path d="M1522.5,761.8 H1534.8 V744.3 M1540.8,744.3 V761.8 H1551.0" stroke="#ffffff" stroke-width="2" fill="none"/>
<text transform="translate(1552.0,761.5) rotate(0) skewX(-15) scale(0.63,1)" font-size="26" font-weight="200" fill="#ffffff" text-anchor="start" stroke="#ffffff" stroke-width="0.5">125X8</text>
<g transform="translate(981.3,694.8) rotate(-90)"><path d="M0,-17 H10.5 L11.5,0 M17,0 L16,-17 H28" stroke="#fff" stroke-width="2" fill="none"/></g>
<text transform="translate(981.3,663.8) rotate(-90) skewX(-15) scale(0.66,1)" font-size="26" font-weight="200" fill="#ffffff" text-anchor="start" stroke="#ffffff" stroke-width="0.5">75X6</text>
<g transform="translate(1209.0,708.4) rotate(-90)"><path d="M0,-17 H10.5 L11.5,0 M17,0 L16,-17 H28" stroke="#fff" stroke-width="2" fill="none"/></g>
<text transform="translate(1209.0,677.4) rotate(-90) skewX(-15) scale(0.66,1)" font-size="26" font-weight="200" fill="#ffffff" text-anchor="start" stroke="#ffffff" stroke-width="0.5">75X6</text>
<g transform="translate(1437.0,719.6) rotate(-90)"><path d="M0,-17 H10.5 L11.5,0 M17,0 L16,-17 H28" stroke="#fff" stroke-width="2" fill="none"/></g>
<text transform="translate(1437.0,688.6) rotate(-90) skewX(-15) scale(0.66,1)" font-size="26" font-weight="200" fill="#ffffff" text-anchor="start" stroke="#ffffff" stroke-width="0.5">75X6</text>
<g transform="translate(1662.0,734.6) rotate(-90)"><path d="M0,-17 H10.5 L11.5,0 M17,0 L16,-17 H28" stroke="#fff" stroke-width="2" fill="none"/></g>
<text transform="translate(1662.0,703.6) rotate(-90) skewX(-15) scale(0.66,1)" font-size="26" font-weight="200" fill="#ffffff" text-anchor="start" stroke="#ffffff" stroke-width="0.5">75X6</text>
<path d="M780.7,670 V678.7 H771.2 M790.2,684.6 H782.6 V693.2" stroke="#fff" stroke-width="2" fill="none"/>
<text transform="translate(791.0,668.0) rotate(-90) skewX(-15) scale(0.66,1)" font-size="26" font-weight="200" fill="#ffffff" text-anchor="start" stroke="#ffffff" stroke-width="0.5">75X6</text>
<line x1="795.5" y1="605.0" x2="795.5" y2="695.0" stroke="#000056" stroke-width="1"/>
<g transform="translate(857.5,616.0) rotate(47.7)"><path d="M0,-17 H10.5 L11.5,0 M17,0 L16,-17 H28" stroke="#fff" stroke-width="2" fill="none"/></g>
<text transform="translate(878.4,638.9) rotate(47.7) skewX(-15) scale(0.66,1)" font-size="26" font-weight="200" fill="#ffffff" text-anchor="start" stroke="#ffffff" stroke-width="0.5">75X6</text>
<g transform="translate(1067.0,689.0) rotate(-42)"><path d="M0,-17 H10.5 L11.5,0 M17,0 L16,-17 H28" stroke="#fff" stroke-width="2" fill="none"/></g>
<text transform="translate(1090.0,668.3) rotate(-42) skewX(-15) scale(0.66,1)" font-size="26" font-weight="200" fill="#ffffff" text-anchor="start" stroke="#ffffff" stroke-width="0.5">75X6</text>
<g transform="translate(1295.0,698.5) rotate(-38.7)"><path d="M0,-17 H10.5 L11.5,0 M17,0 L16,-17 H28" stroke="#fff" stroke-width="2" fill="none"/></g>
<text transform="translate(1319.2,679.1) rotate(-38.7) skewX(-15) scale(0.66,1)" font-size="26" font-weight="200" fill="#ffffff" text-anchor="start" stroke="#ffffff" stroke-width="0.5">75X6</text>
<g transform="translate(1519.0,710.5) rotate(-35)"><path d="M0,-17 H10.5 L11.5,0 M17,0 L16,-17 H28" stroke="#fff" stroke-width="2" fill="none"/></g>
<text transform="translate(1544.4,692.7) rotate(-35) skewX(-15) scale(0.66,1)" font-size="26" font-weight="200" fill="#ffffff" text-anchor="start" stroke="#ffffff" stroke-width="0.5">75X6</text>
<g transform="translate(1744.0,719.0) rotate(-31.5)"><path d="M0,-17 H10.5 L11.5,0 M17,0 L16,-17 H28" stroke="#fff" stroke-width="2" fill="none"/></g>
<text transform="translate(1770.4,702.8) rotate(-31.5) skewX(-15) scale(0.66,1)" font-size="26" font-weight="200" fill="#ffffff" text-anchor="start" stroke="#ffffff" stroke-width="0.5">75X6</text>
<g transform="translate(1512,590) rotate(5.7)"><path d="M2,0 V-19 M8,0 V-19 M11,-19 H19" stroke="#fff" stroke-width="1.6" fill="none"/></g>
<text transform="translate(1534.0,592.5) rotate(5.7) skewX(-15) scale(0.64,1)" font-size="26" font-weight="200" fill="#ffffff" text-anchor="start" stroke="#ffffff" stroke-width="0.4">140X9</text>
<g transform="translate(1732.5,611.5) rotate(5.7)"><path d="M0,-17 H10.5 L11.5,0 M17,0 L16,-17 H28" stroke="#fff" stroke-width="2" fill="none"/></g>
<text transform="translate(1764.0,615.0) rotate(5.7) skewX(-15) scale(0.64,1)" font-size="26" font-weight="200" fill="#ffffff" text-anchor="start" stroke="#ffffff" stroke-width="0.4">140X9</text>
<text transform="translate(854.3,667.0) rotate(47.7) skewX(-15) scale(0.66,1)" font-size="26" font-weight="200" fill="#f0680a" text-anchor="middle" stroke="#f0680a" stroke-width="0.45">2973</text>
<text transform="translate(1017.5,660.5) rotate(-90) skewX(-15) scale(0.66,1)" font-size="26" font-weight="200" fill="#f0680a" text-anchor="middle" stroke="#f0680a" stroke-width="0.45">2000</text>
<text transform="translate(1123.5,689.7) rotate(-42) skewX(-15) scale(0.66,1)" font-size="26" font-weight="200" fill="#f0680a" text-anchor="middle" stroke="#f0680a" stroke-width="0.45">2691</text>
<text transform="translate(1245.2,670.9) rotate(-90) skewX(-15) scale(0.66,1)" font-size="26" font-weight="200" fill="#f0680a" text-anchor="middle" stroke="#f0680a" stroke-width="0.45">1800</text>
<text transform="translate(1349.6,704.4) rotate(-38.7) skewX(-15) scale(0.66,1)" font-size="26" font-weight="200" fill="#f0680a" text-anchor="middle" stroke="#f0680a" stroke-width="0.45">2561</text>
<text transform="translate(1473.5,681.5) rotate(-90) skewX(-15) scale(0.66,1)" font-size="26" font-weight="200" fill="#f0680a" text-anchor="middle" stroke="#f0680a" stroke-width="0.45">1600</text>
<text transform="translate(1577.0,719.8) rotate(-35) skewX(-15) scale(0.66,1)" font-size="26" font-weight="200" fill="#f0680a" text-anchor="middle" stroke="#f0680a" stroke-width="0.45">2441</text>
<text transform="translate(1703.5,693.5) rotate(-90) skewX(-15) scale(0.66,1)" font-size="26" font-weight="200" fill="#f0680a" text-anchor="middle" stroke="#f0680a" stroke-width="0.45">1400</text>
<text transform="translate(1805.8,735.4) rotate(-31.5) skewX(-15) scale(0.66,1)" font-size="26" font-weight="200" fill="#f0680a" text-anchor="middle" stroke="#f0680a" stroke-width="0.45">2320</text>
</svg>
<!-- ===== left dialog: Содержимое метки - шаблон ===== -->
<div class="win" style="left:106px;top:37px;width:591px;height:357px;border-color:#d8d8d8">
  <div class="tbar" style="background:linear-gradient(128deg,#707376 0%,#6c6f72 5%,#585b5e 30%,#3c3f42 40%,#1c1e20 46%,#0a0b0d 52%,#08090b 66%,#1a1c1e 72%,#4c4f52 77%,#5c5f62 81%,#585b5e 86%,#5c5f62 92%,#606366 97%,#55585b 100%)"></div>
  <div class="sideL" style="background:linear-gradient(180deg,#74777a 0,#8c8f92 60px,#a4a7aa 80px,#3c3f42 82px,#34373a 200px,#2c2e31 100%)"></div>
  <div class="sideR" style="background:linear-gradient(180deg,#686b6e 0,#85888b 55px,#a0a3a6 76px,#1a1c1e 79px,#1e2022 120px,#3a3c3f 220px,#565a5d 100%)"></div>
  <div class="botm" style="background:linear-gradient(90deg,#2c2e31 0,#1c1e20 25%,#0f1012 50%,#1a1c1e 75%,#3a3c3f 100%)"></div>
  <div class="glow" style="left:4px;top:7px;width:206px;height:22px"></div>
  <div class="ttl" style="left:7px;top:8px;line-height:18px">Содержимое метки - шаблон</div>
  <div class="closeb" style="left:524px;top:-1px;width:59px;height:25px;border-color:#5e1e12;box-shadow:0 0 0 1px rgba(235,235,235,.85), inset 0 0 0 1px rgba(255,255,255,.28);background:linear-gradient(180deg,#e2a090 0,#d27c6a 25%,#c96754 46%,#b22c16 52%,#bf3218 78%,#d4684a 100%)">
    <svg width="58" height="24" viewBox="0 0 58 24" style="position:absolute;left:0;top:0"><path d="M22.6,5.2 L27.2,5.2 L29.9,8.7 L32.6,5.2 L37.2,5.2 L32.2,11.6 L37.5,18.4 L32.8,18.4 L29.9,14.6 L27,18.4 L22.3,18.4 L27.6,11.6 Z" fill="#fff" stroke="#46506c" stroke-width="1" stroke-linejoin="round"/></svg>
  </div>
  <div class="client" style="left:6px;top:33px;width:577px;height:316px"></div>
</div>
<div class="abs" style="left:0;top:0;width:0;height:0">
  <div class="t" style="left:119.5px;top:79px">Выберите шаблон, определяющий содержимое метки:</div>
  <div class="t" style="left:119px;top:109px">Другие элементы будут удалены из метки.</div>
  <div class="list" style="left:120px;top:135px;width:566px;height:174px"></div>
  <div class="hdr" style="left:122px;top:137px;width:562px;height:25px"></div>
  <div class="abs" style="left:401px;top:139px;width:1px;height:21px;background:#dcdcdc"></div>
  <div class="abs" style="left:541px;top:139px;width:1px;height:21px;background:#dcdcdc"></div>
  <div class="t" style="left:130px;top:142px">Шаблон</div>
  <div class="t" style="left:410px;top:142px">Дата изменения</div>
  <div class="t" style="left:130px;top:167px">Спаренный_крестовое</div>
  <div class="t num" style="left:410px;top:167px">10.10.2012 15:55</div>
  <div class="sel" style="left:402px;top:187px;width:282px;height:24px"></div>
  <div class="abs" style="left:126px;top:187px;width:276px;height:24px;border:1px dotted #000"></div>
  <div class="t" style="left:130px;top:191px">Спаренный_полки вверх</div>
  <div class="t num" style="left:410px;top:191px;color:#fff">10.10.2012 14:59</div>
  <div class="t" style="left:130px;top:215px">Спаренный_полки вниз</div>
  <div class="t num" style="left:410px;top:215px">10.10.2012 15:49</div>
  <div class="btn" style="left:117px;top:316px;width:180px;height:27px"><span>Создать новый...</span></div>
  <div class="btn" style="left:303px;top:316px;width:189px;height:27px"><span>Редактирование...</span></div>
  <div class="btn" style="left:498px;top:316px;width:188px;height:27px"><span>Обновить список</span></div>
  <div class="hline" style="left:117px;top:348px;width:569px"></div>
  <div class="btn def" style="left:117px;top:355px;width:89px;height:28px"><span>Изменить</span></div>
  <div class="btn" style="left:604px;top:355px;width:82px;height:28px"><span>Отмена</span></div>
</div>
<!-- ===== right dialog: Свойства маркера детали ===== -->
<div class="win" style="left:772px;top:32px;width:983px;height:542px;border-color:#aeb0b2;background:#08090b">
  <div class="tbar" style="background:linear-gradient(22deg,rgba(58,60,63,0) 0%,rgba(58,60,63,0) 78%,rgba(58,60,63,.5) 84%,#383a3d 90%,#3c3e41 100%),linear-gradient(118deg,#55585b 0%,#3e4043 2.5%,#2c2e31 8%,#101113 22%,#050607 40%,#060708 100%)"></div>
  <div class="sideL" style="background:linear-gradient(180deg,#333538 0,#2e3033 60px,#1a1c1e 200px,#0c0d0f 100%)"></div>
  <div class="sideR" style="background:linear-gradient(180deg,#3a3c3f 0,#2c2e31 60px,#141618 200px,#07080a 100%)"></div>
  <div class="botm" style="background:linear-gradient(90deg,#0e0f11 0,#08090b 50%,#06070a 100%)"></div>
  <div class="glow" style="left:25px;top:5px;width:192px;height:25px;background:rgba(255,255,255,.40);filter:blur(7px)"></div>
  <svg class="abs" style="left:7px;top:6px" width="22" height="22" viewBox="0 0 22 22">
    <path d="M1,4 L14,3.2 Q18,3 20.5,1 V16.5 H1 Z" fill="#e2214f"/>
    <path d="M1,16.5 H20.5 V18 H13.5 V19 H1 Z" fill="#c21a40"/>
    <rect x="1" y="17" width="12.5" height="3.2" fill="#2d62d2"/>
    <path d="M3,10 L7,7 L11,10 L7,13 Z M10.5,10 L14.5,7 L18.5,10 L14.5,13 Z M7,6.5 L11,4.2 L15,6.5 M7,13.5 L11,15.8 L15,13.5 M2,7 L4.5,5.2 M19.5,7 L17,5.2 M2,13 L4.5,14.8 M19.5,13 L17,14.8" stroke="#fff" stroke-width="1.5" fill="none"/>
  </svg>
  <div class="ttl" style="left:32.5px;top:8.5px;line-height:18px;color:#000;letter-spacing:-.3px;text-shadow:none">Свойства маркера детали</div>
  <div class="closeb" style="left:915px;top:-1px;width:61px;height:26px;background:transparent;border:1px solid #8d8f91;border-top:none;border-radius:0 0 4px 4px;box-shadow:inset 0 0 0 1px #2a2c2e,inset 0 0 0 2px #7e8083">
    <svg width="59" height="24" viewBox="0 0 59 24" style="position:absolute;left:0;top:0"><path d="M23.5,6.5 L27.5,6.5 L30,9.7 L32.5,6.5 L36.5,6.5 L32,12.3 L36.8,18.5 L32.6,18.5 L30,15.1 L27.4,18.5 L23.2,18.5 L28,12.3 Z" fill="#fff" stroke="#4a4c4e" stroke-width=".8" stroke-linejoin="round"/></svg>
  </div>
  <div class="client" style="left:6px;top:33px;width:969px;height:501px"></div>
</div>
<div class="abs" style="left:0;top:0;width:0;height:0">
  <!-- top group -->
  <div class="abs" style="left:785px;top:76px;width:957px;height:42px;border:1px solid #dcdfe3;border-radius:3px;box-shadow:inset 0 0 0 1px #fafafa"></div>
  <div class="btn" style="left:789px;top:85px;width:82px;height:27px"><span>Сохранить</span></div>
  <div class="btn" style="left:877px;top:85px;width:76px;height:27px"><span>Загрузить</span></div>
  <div class="inp2" style="left:958px;top:84px;width:390px;height:24px"></div>
  <div class="t" style="left:961px;top:87px">standard</div>
  <div class="arr" style="left:1331px;top:94px"></div>
  <div class="btn" style="left:1353px;top:85px;width:108px;height:27px"><span>Сохранить как</span></div>
  <div class="inp2" style="left:1466px;top:87px;width:273px;height:22px"></div>
  <div class="t" style="left:1472px;top:89px">standard</div>
  <!-- tabs -->
  <div class="abs" style="left:782px;top:153px;width:963px;height:371px;border:1px solid #898c95;background:#f0f0f0"></div>
  <div class="abs" style="left:887px;top:128px;width:61px;height:26px;border:1px solid #898c95;border-bottom:none;background:linear-gradient(180deg,#f2f2f2 0,#ebebeb 50%,#dddddd 51%,#d2d2d2 100%)"></div>
  <div class="t" style="left:892px;top:133px">Общие</div>
  <div class="abs" style="left:782px;top:126px;width:106px;height:28px;border:1px solid #898c95;border-bottom:none;background:#fdfdfd"></div>
  <div class="abs" style="left:783px;top:152px;width:104px;height:3px;background:linear-gradient(180deg,#fdfdfd,#f0f0f0)"></div>
  <div class="t" style="left:789px;top:132px">Содержимое</div>
  <!-- checkbox -->
  <div class="abs" style="left:786px;top:168px;width:16px;height:16px;border:1px solid #8e8f8f;background:#f4f4f4;box-shadow:inset 0 0 0 1px #f4f4f4, inset 0 0 0 2px #b5bcc4"></div>
  <svg class="abs" style="left:786px;top:168px" width="16" height="16" viewBox="0 0 15 15"><path d="M3.6,7.2 L6.2,11.2 L11.4,3.4" stroke="#2a3a8c" stroke-width="1.9" fill="none"/></svg>
  <div class="t" style="left:806px;top:168px">Содержимое</div>
  <div class="abs" style="left:908px;top:175px;width:832px;height:1px;background:#a0a0a0"></div>
  <!-- left list -->
  <div class="list" style="left:787px;top:194px;width:300px;height:325px"></div>
  <div class="hdr" style="left:789px;top:197px;width:275px;height:24px;border-bottom:1px solid #d5d5d5"></div>
  <div class="t" style="left:797px;top:201px">Доступные элементы</div>
  <div class="t" style="left:797px;top:226px">Подгонка (БС/ДС)</div>
  <div class="t" style="left:797px;top:250px">Направление грани</div>
  <div class="t" style="left:797px;top:274px">Диаметр выступающей ножки</div>
  <div class="t" style="left:797px;top:298px">Расстояние между центрами</div>
  <div class="t" style="left:797px;top:322px">Текст</div>
  <div class="t" style="left:797px;top:346px">Символ</div>
  <div class="t" style="left:798px;top:370px">&lt;&nbsp; &gt;</div>
  <div class="t" style="left:798px;top:394px">&lt;--'</div>
  <div class="t" style="left:798px;top:418px">&lt;--</div>
  <div class="t" style="left:797px;top:442px;letter-spacing:-.03px">Определенный пользователем атри...</div>
  <div class="sel" style="left:793px;top:462px;width:271px;height:24px"></div>
  <div class="t" style="left:797px;top:466px;color:#fff">Шаблон</div>
  <!-- v scrollbar -->
  <div class="abs" style="left:1065px;top:196px;width:20px;height:298px;background:#f0f0f0"></div>
  <div class="abs" style="left:1066px;top:342px;width:18px;height:132px;border:1px solid #8a8a8a;border-radius:2px;background:linear-gradient(90deg,#f3f3f3 0,#dedede 45%,#cfcfcf 55%,#bdbdbd 100%)"></div>
  <svg class="abs" style="left:1065px;top:196px" width="20" height="298" viewBox="0 0 20 298">
    <path d="M6,12 L10,8 L14,12 Z" fill="#505050"/><path d="M6,287 L10,291 L14,287 Z" fill="#505050"/>
    <path d="M6,207.5 H14 M6,210.5 H14 M6,213.5 H14 M6,216.5 H14" stroke="#555" stroke-width="1"/>
  </svg>
  <!-- h scrollbar -->
  <div class="abs" style="left:789px;top:496px;width:276px;height:21px;background:#f0f0f0"></div>
  <div class="abs" style="left:812px;top:497px;width:226px;height:18px;border:1px solid #8a8a8a;border-radius:2px;background:linear-gradient(180deg,#f3f3f3 0,#dedede 45%,#cfcfcf 55%,#bdbdbd 100%)"></div>
  <svg class="abs" style="left:789px;top:496px" width="276" height="21" viewBox="0 0 276 21">
    <path d="M12,6.5 L8,10.5 L12,14.5 Z" fill="#505050"/><path d="M262,6.5 L266,10.5 L262,14.5 Z" fill="#505050"/>
    <path d="M131.5,6 V14 M134.5,6 V14 M137.5,6 V14" stroke="#555" stroke-width="1"/>
  </svg>
  <div class="abs" style="left:1065px;top:494px;width:20px;height:23px;background:#f0f0f0"></div>
  <!-- middle buttons -->
  <div class="btn dis" style="left:1093px;top:325px;width:89px;height:28px"><span>Добавить &gt;</span></div>
  <div class="btn" style="left:1096px;top:359px;width:82px;height:28px"><span>Удалить</span></div>
  <!-- right list -->
  <div class="list" style="left:1188px;top:194px;width:300px;height:325px"></div>
  <div class="hdr" style="left:1190px;top:197px;width:296px;height:24px"></div>
  <div class="abs" style="left:1470px;top:198px;width:1px;height:21px;background:#dcdcdc"></div>
  <div class="t" style="left:1198px;top:201px">Элементы метки</div>
  <div class="sel" style="left:1194px;top:222px;width:292px;height:24px"></div>
  <div class="t" style="left:1199px;top:226px;color:#fff">&lt;&lt; Шаблон - Спаренный_полки вве...</div>
  <!-- right column -->
  <div class="t" style="left:1496px;top:198px">Рамка вокруг элементов</div>
  <div class="abs" style="left:1673px;top:205px;width:67px;height:1px;background:#a0a0a0"></div>
  <div class="btn" style="left:1494px;top:224px;width:135px;height:28px"><span>&lt; Добавить рамку</span></div>
  <div class="t" style="left:1496px;top:263px">Тип:</div>
  <div class="inp2" style="left:1539px;top:259px;width:75px;height:21px"></div>
  <div class="abs" style="left:1545px;top:263px;width:41px;height:12px;border:1px solid #000;font-size:10px;line-height:11px;letter-spacing:.7px;text-align:center;font-family:'Liberation Sans',sans-serif">123</div>
  <div class="arr" style="left:1598px;top:266px"></div>
  <div class="t" style="left:1496px;top:296px">Цвет:</div>
  <div class="inp2" style="left:1539px;top:292px;width:75px;height:21px"></div>
  <div class="abs" style="left:1544px;top:300px;width:45px;height:4px;background:#00ff00"></div>
  <div class="arr" style="left:1598px;top:299px"></div>
  <div class="t" style="left:1496px;top:328px">Шрифт</div>
  <div class="abs" style="left:1551px;top:335px;width:189px;height:1px;background:#a0a0a0"></div>
  <div class="t" style="left:1496px;top:359px">Цвет:</div>
  <div class="inp2" style="left:1556px;top:355px;width:185px;height:21px"></div>
  <div class="abs" style="left:1561px;top:363px;width:45px;height:4px;background:#00ff00"></div>
  <div class="arr" style="left:1725px;top:362px"></div>
  <div class="t" style="left:1496px;top:391px">Высота:</div>
  <div class="inp2" style="left:1556px;top:387px;width:185px;height:23px"></div>
  <div class="t num" style="left:1562px;top:391px">0.00</div>
  <div class="t" style="left:1496px;top:423px">Шрифт:</div>
  <div class="inp2" style="left:1556px;top:419px;width:90px;height:23px"></div>
  <div class="btn" style="left:1651px;top:417px;width:89px;height:28px"><span>Выбрать...</span></div>
  <div class="abs" style="left:1493px;top:450px;width:247px;height:1px;background:#a0a0a0"></div>
  <div class="btn" style="left:1494px;top:457px;width:143px;height:28px"><span>Переместить вверх</span></div>
  <div class="btn" style="left:1494px;top:491px;width:136px;height:28px"><span>Переместить вниз</span></div>
  <!-- bottom -->
  <div class="abs" style="left:781px;top:528px;width:965px;height:1px;background:#fff"></div>
  <div class="btn" style="left:783px;top:535px;width:82px;height:28px"><span>OK</span></div>
  <div class="btn" style="left:871px;top:535px;width:100px;height:28px"><span>Применить</span></div>
  <div class="btn" style="left:977px;top:535px;width:89px;height:28px"><span>Изменить</span></div>
  <div class="btn" style="left:1072px;top:535px;width:86px;height:28px"><span>Получить</span></div>
  <div class="btn" style="left:1164px;top:539px;width:55px;height:19px"></div>
  <svg class="abs" style="left:1164px;top:539px" width="55" height="19" viewBox="0 0 55 19">
    <rect x="7" y="4" width="11" height="11" fill="#fff"/>
    <path d="M5.9,3 H17.9 L16.6,4.4 H7.4 V13.4 L5.9,14.9 Z" fill="#000"/>
    <path d="M9.2,8.6 L11.5,12 L16,6.6" stroke="#000" stroke-width="2" fill="none"/>
    <path d="M23.9,16 L30.2,2.8" stroke="#000" stroke-width="1.7" stroke-linecap="round"/>
    <rect x="37.5" y="4" width="11" height="11" fill="#fff"/>
    <path d="M36.4,3 H48 L46.7,4.4 H37.9 V13.4 L36.4,14.9 Z" fill="#000"/>
  </svg>
  <div class="btn" style="left:1662px;top:535px;width:82px;height:28px"><span>Отмена</span></div>
</div>
</body></html>
